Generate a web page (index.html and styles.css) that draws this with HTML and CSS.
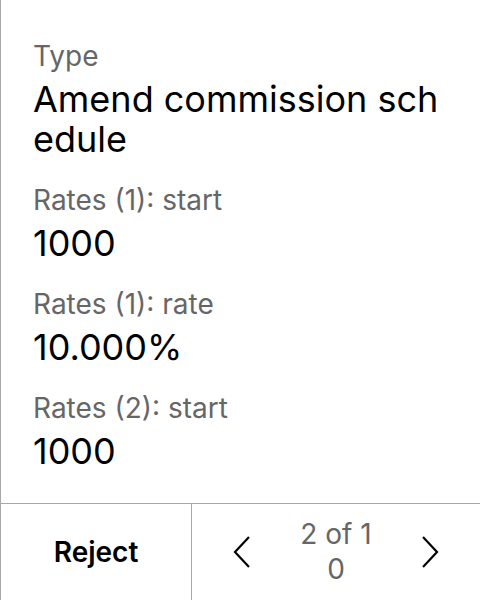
FILE: index.html
```html
<!DOCTYPE html>
<html>
<head>
<meta charset="utf-8">
<link rel="stylesheet" href="styles.css">
</head>
<body>
<div class="panel">
  <div class="fields">
    <div class="field">
      <div class="label">Type</div>
      <div class="value">Amend commission schedule</div>
    </div>
    <div class="field">
      <div class="label">Rates (1): start</div>
      <div class="value">1000</div>
    </div>
    <div class="field">
      <div class="label">Rates (1): rate</div>
      <div class="value">10.000%</div>
    </div>
    <div class="field">
      <div class="label">Rates (2): start</div>
      <div class="value">1000</div>
    </div>
  </div>
  <div class="footer">
    <div class="reject">Reject</div>
    <div class="pager">
      <span class="chev">
        <svg width="18" height="32" viewBox="0 0 18 32"><path d="M16 1 L2 16 L16 31" fill="none" stroke="#000" stroke-width="2.2"/></svg>
      </span>
      <span class="count">2 of 10</span>
      <span class="chev">
        <svg width="18" height="32" viewBox="0 0 18 32"><path d="M2 1 L16 16 L2 31" fill="none" stroke="#000" stroke-width="2.2"/></svg>
      </span>
    </div>
  </div>
</div>
</body>
</html>
```
FILE: styles.css
```css
html, body {
  margin: 0;
  padding: 0;
  background: #fff;
}
body {
  font-family: Inter, "Noto Sans", sans-serif;
  color: #000;
}
.panel {
  width: 480px;
  height: 600px;
  box-sizing: border-box;
  border-left: 1px solid #a8a8a8;
  display: flex;
  flex-direction: column;
}
.fields {
  flex: 1;
  padding: 38px 32px 0 32px;
  display: flex;
  flex-direction: column;
  gap: 23px;
}
.field {
  display: flex;
  flex-direction: column;
  gap: 5px;
}
.label {
  font-size: 28px;
  line-height: 36px;
  color: #666;
}
.value {
  font-size: 36px;
  line-height: 40px;
  color: #000;
  word-break: break-all;
}
.footer {
  height: 96px;
  border-top: 1px solid #a8a8a8;
  display: grid;
  grid-template-columns: 191px 1fr;
}
.reject {
  display: flex;
  align-items: center;
  justify-content: center;
  font-size: 28px;
  font-weight: 600;
  border-right: 1px solid #a8a8a8;
}
.pager {
  display: flex;
  align-items: center;
  justify-content: space-between;
  padding: 0 26px;
}
.chev {
  width: 48px;
  display: flex;
  justify-content: center;
}
.count {
  width: 78px;
  text-align: center;
  font-size: 28px;
  line-height: 35px;
  color: #666;
  word-break: break-all;
}
```
